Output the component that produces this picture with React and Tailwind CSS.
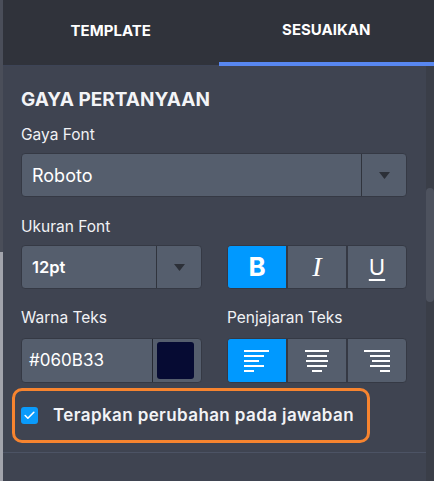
import { Check } from 'lucide-react';

const Caret = () => (
  <svg width="11" height="7" viewBox="0 0 11 7">
    <path d="M0 0h11L5.5 7z" fill="#2c3038" />
  </svg>
);

const AlignIcon = ({ lines }) => (
  <svg width="26" height="22" viewBox="0 0 26 22">
    {lines.map(([x, w], i) => (
      <rect key={i} x={x} y={i * 5} width={w} height="2" fill="#ffffff" />
    ))}
  </svg>
);

const Label = ({ children }) => (
  <div className="text-[15.5px] leading-[20px] text-[#f1f2f5]">{children}</div>
);

const App = () => {
  return (
    <div className="w-[434px] h-[481px] flex overflow-hidden font-['Inter',sans-serif]">
      <div className="w-[3px] flex flex-col">
        <div className="h-[252px] bg-[#4a4e59]" />
        <div className="flex-1 bg-[#a2a4ac]" />
      </div>

      <div className="flex-1 flex flex-col bg-[#3f4451]">
        <header className="h-[66px] flex bg-[#30333b] border-b border-[#3d4456]">
          <div className="flex-1 flex items-center justify-center text-[15px] font-bold text-white pb-[2px]">
            TEMPLATE
          </div>
          <div className="flex-1 flex items-center justify-center text-[15px] font-bold text-white pb-[2px] border-b-4 border-[#5887f0] mb-[-1px]">
            SESUAIKAN
          </div>
        </header>

        <div className="flex-1 flex">
          <div className="flex-1 flex flex-col">
            <div className="pl-[18px] pr-[19px] pt-[22px] flex flex-col">
              <div className="text-[19px] leading-[24px] font-bold text-[#f3f4f7]">GAYA PERTANYAAN</div>

              <div className="mt-[13px]">
                <Label>Gaya Font</Label>
              </div>
              <div className="mt-[8px] h-[44px] flex rounded-[4px] border border-[#353944] bg-[#555e6d]">
                <div className="flex-1 flex items-center pl-[10px] text-[18px] text-white">Roboto</div>
                <div className="w-[45px] border-l border-[#30343d] flex items-center justify-center">
                  <Caret />
                </div>
              </div>

              <div className="mt-[20px]">
                <Label>Ukuran Font</Label>
              </div>
              <div className="mt-[8px] flex gap-[25px]">
                <div className="w-[181px] h-[44px] flex rounded-[4px] border border-[#353944] bg-[#555e6d]">
                  <div className="flex-1 flex items-center pl-[10px] text-[16.5px] font-semibold text-white">12pt</div>
                  <div className="w-[45px] border-l border-[#30343d] flex items-center justify-center">
                    <Caret />
                  </div>
                </div>
                <div className="w-[180px] h-[44px] flex rounded-[4px] overflow-hidden border border-[#353944] bg-[#555e6d]">
                  <div className="flex-1 flex items-center justify-center bg-[#0099ff] text-[26px] leading-none font-bold text-white">B</div>
                  <div className="flex-1 flex items-center justify-center border-l-2 border-[#353944] text-[28px] leading-none italic text-white font-['Liberation_Serif',serif]">
                    I
                  </div>
                  <div className="flex-1 flex items-center justify-center border-l-2 border-[#353944] text-[22px] leading-none text-white underline decoration-[1.5px] underline-offset-[4px]">
                    U
                  </div>
                </div>
              </div>

              <div className="mt-[19px] flex gap-[25px]">
                <div className="w-[181px]">
                  <Label>Warna Teks</Label>
                </div>
                <Label>Penjajaran Teks</Label>
              </div>
              <div className="mt-[10px] flex gap-[25px]">
                <div className="w-[181px] h-[45px] flex rounded-[4px] border border-[#353944] bg-[#555e6d]">
                  <div className="flex-1 flex items-center pl-[7px] text-[17px] text-white">#060B33</div>
                  <div className="w-[49px] border-l border-[#262a33] flex items-center pl-[4px]">
                    <div className="w-[37px] h-[37px] rounded-[3px] bg-[#060B33]" />
                  </div>
                </div>
                <div className="w-[180px] h-[45px] flex rounded-[4px] overflow-hidden border border-[#353944] bg-[#555e6d]">
                  <div className="flex-1 flex items-center justify-center bg-[#0099ff]">
                    <AlignIcon lines={[[0, 25], [0, 20], [0, 15], [0, 20], [0, 10]]} />
                  </div>
                  <div className="flex-1 flex items-center justify-center border-l-2 border-[#353944]">
                    <AlignIcon lines={[[1, 24], [3, 20], [2, 22], [3, 20], [8, 10]]} />
                  </div>
                  <div className="flex-1 flex items-center justify-center border-l-2 border-[#353944]">
                    <AlignIcon lines={[[0, 26], [6, 20], [8, 18], [6, 20], [16, 10]]} />
                  </div>
                </div>
              </div>

              <div className="mt-[5px] ml-[-9px] w-[358px] h-[55px] flex items-center pl-[6px] rounded-[10px] border-[3px] border-[#f7842f]">
                <div className="w-[17px] h-[17px] rounded-[3px] bg-[#0a9bfb] flex items-center justify-center">
                  <Check size={13} strokeWidth={3} color="#ffffff" />
                </div>
                <div className="ml-[15px] text-[17px] font-semibold text-[#f2f3f6] tracking-[0.4px]">
                  Terapkan perubahan pada jawaban
                </div>
              </div>
            </div>

            <div className="mt-[9px] h-px bg-[#4c5364]" />
          </div>

          <div className="w-[8px] bg-[#3a3e48] flex flex-col">
            <div className="mt-[122px] h-[114px] rounded-[4px] bg-[#4d525e]" />
          </div>
        </div>
      </div>
    </div>
  );
};

export default App;
